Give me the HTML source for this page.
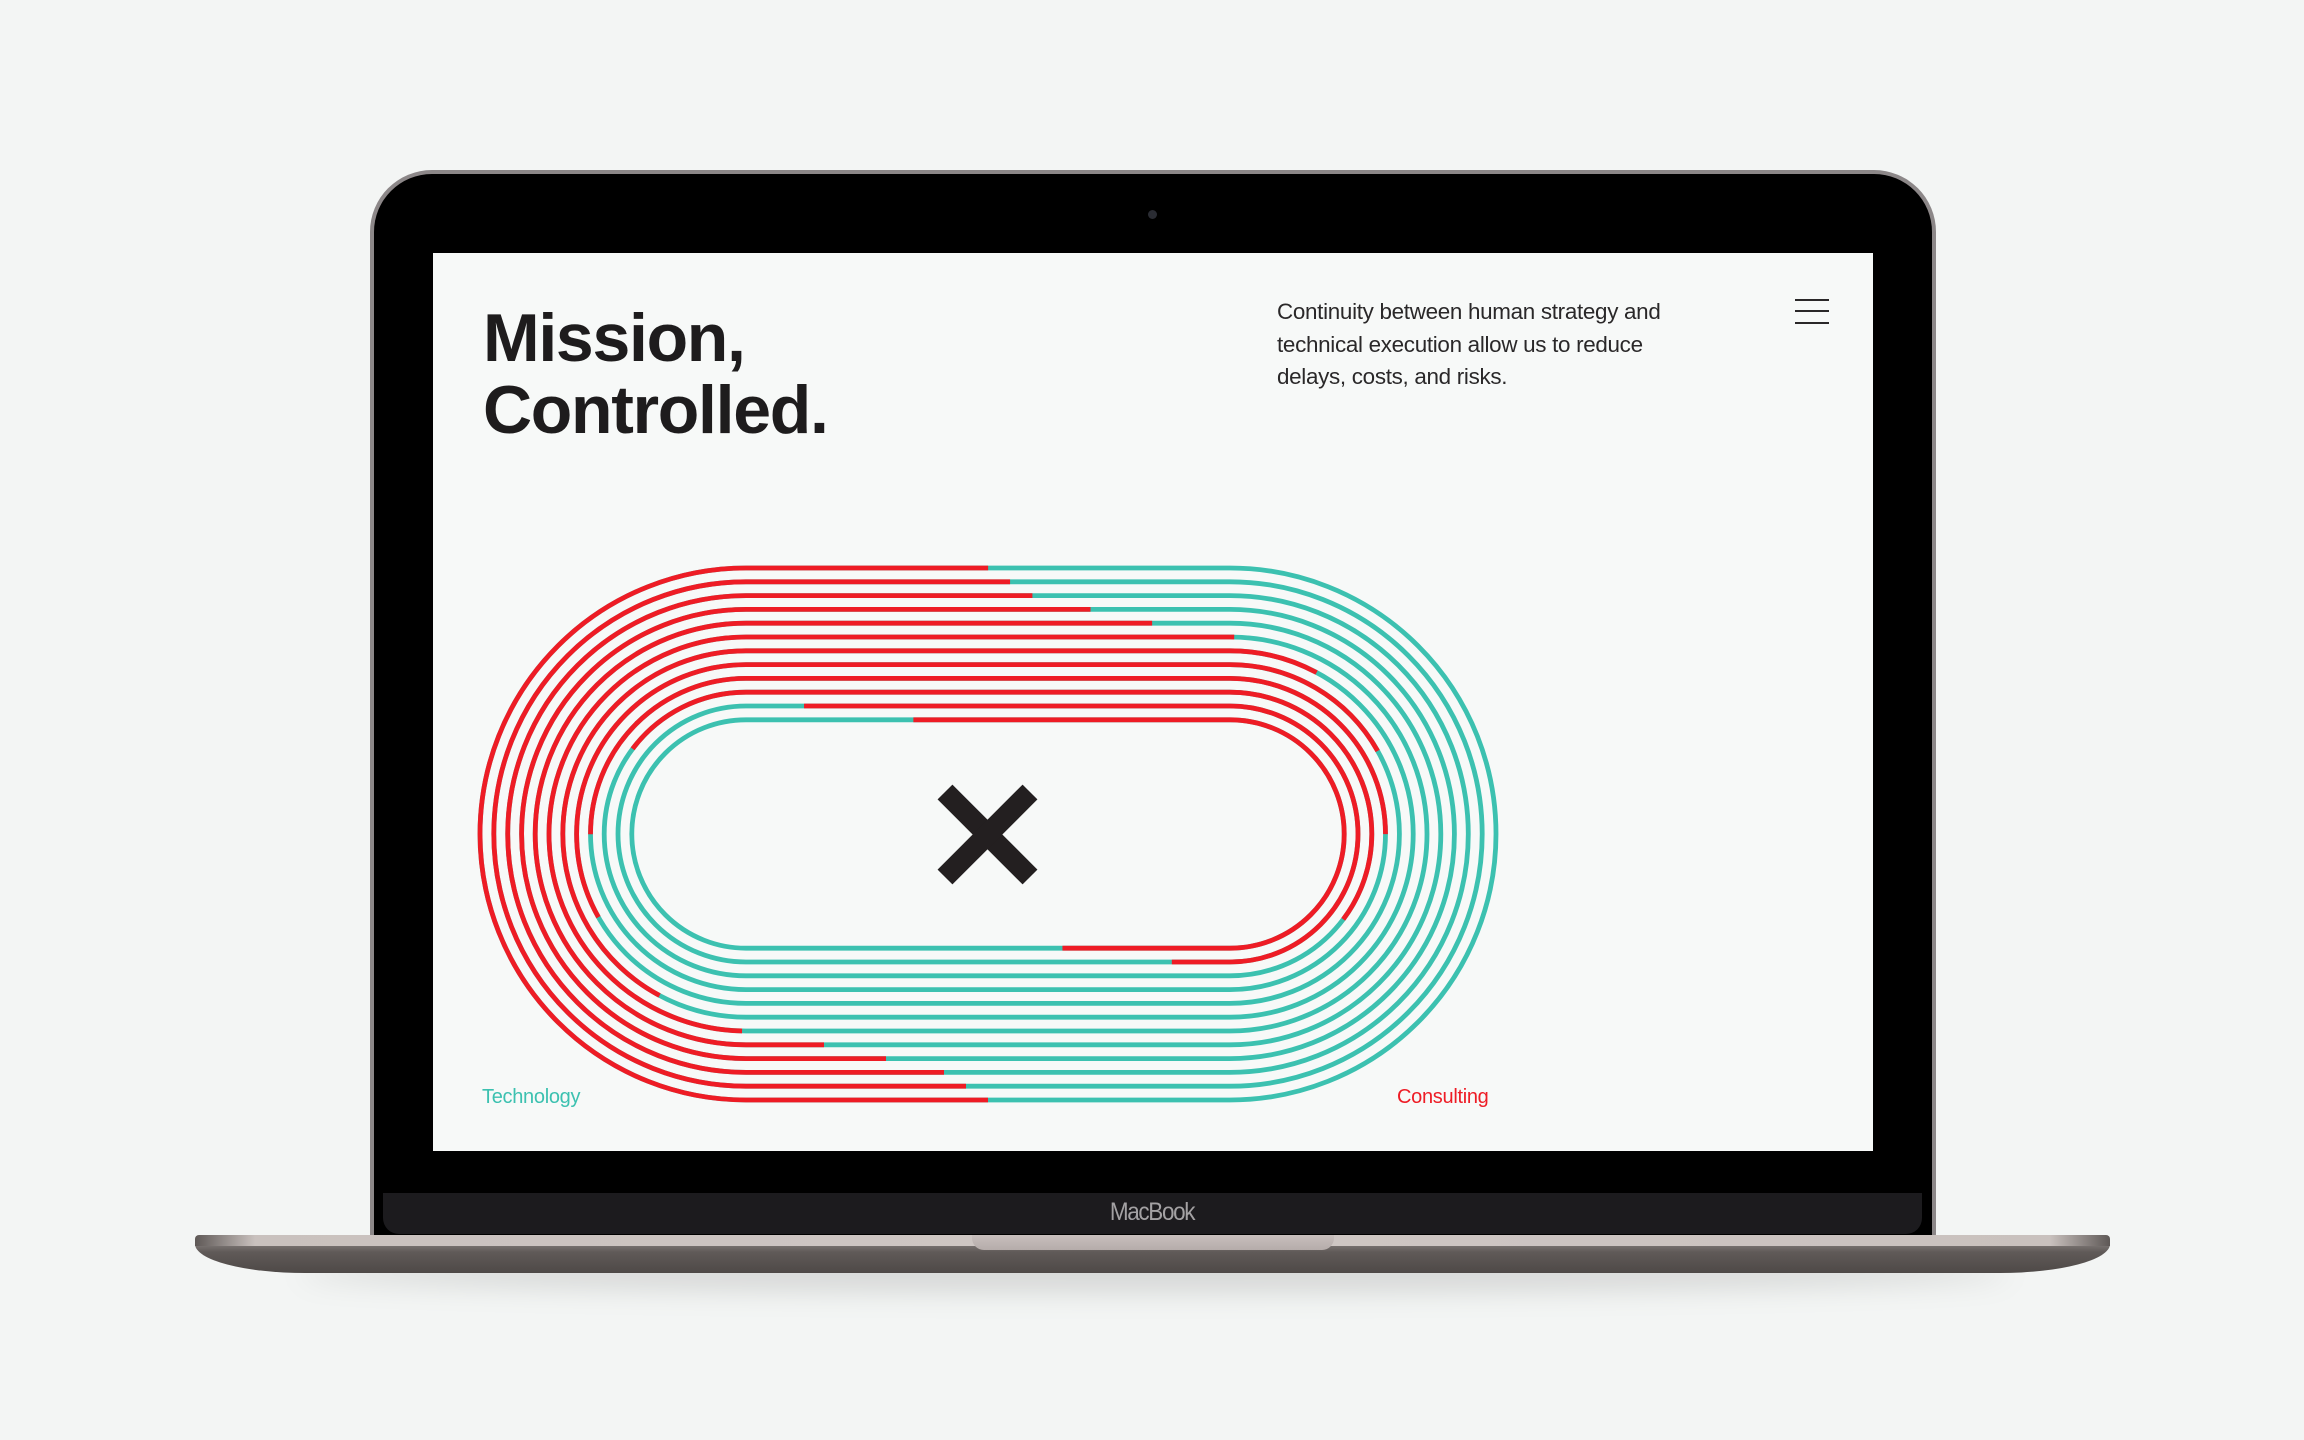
<!DOCTYPE html>
<html><head><meta charset="utf-8"><style>
html,body{margin:0;padding:0;}
body{width:2304px;height:1440px;position:relative;overflow:hidden;background:#f3f5f4;font-family:"Liberation Sans",sans-serif;}
.abs{position:absolute;}
</style></head><body>
<!-- shadow -->
<div class="abs" style="left:300px;top:1255px;width:1710px;height:36px;border-radius:50%;background:rgba(0,0,0,0.13);filter:blur(14px);"></div>
<!-- lid -->
<div class="abs" style="left:370px;top:170px;width:1566px;height:1080px;border-radius:62px 62px 0 0;background:#8c8788;"></div>
<div class="abs" style="left:374px;top:174px;width:1558px;height:1074px;border-radius:58px 58px 0 0;background:#000;"></div>
<div class="abs" style="left:383px;top:1193px;width:1539px;height:41px;background:#1c1b1e;border-radius:0 0 16px 16px;"></div>
<div class="abs" style="left:1052px;top:1198px;width:200px;text-align:center;color:#a3a1a3;font-size:25px;letter-spacing:-1.5px;transform:scaleX(0.9);">MacBook</div>
<div class="abs" style="left:1148px;top:210px;width:9px;height:9px;border-radius:50%;background:#2a2c33;"></div>
<!-- base -->
<div class="abs" style="left:195px;top:1244px;width:1915px;height:29px;border-radius:0 0 110px 110px / 0 0 29px 29px;background:linear-gradient(#7d7775 0,#605a58 8px,#4e4947 29px);"></div>
<div class="abs" style="left:195px;top:1235px;width:1915px;height:11px;border-radius:4px 4px 0 0;background:linear-gradient(90deg,#5e5856 0,#c9c1be 60px,#cfc7c4 50%,#c9c1be calc(100% - 60px),#5e5856 100%);"></div>
<div class="abs" style="left:972px;top:1235px;width:362px;height:15px;border-radius:0 0 12px 12px;background:linear-gradient(#c8bfbd,#b5acaa);"></div>
<!-- screen -->
<div class="abs" style="left:433px;top:253px;width:1440px;height:898px;background:#f7f9f8;overflow:hidden;">
  <div class="abs" style="left:50px;top:49px;font-size:68px;font-weight:bold;color:#1e1c1d;line-height:72px;letter-spacing:-1.3px;">Mission,<br>Controlled.</div>
  <div class="abs" style="left:844px;top:43px;font-size:22.4px;color:#2a2829;line-height:32.5px;letter-spacing:-0.3px;">Continuity between human strategy and<br>technical execution allow us to reduce<br>delays, costs, and risks.</div>
  <div class="abs" style="left:1362px;top:46px;width:34px;height:2px;background:#2a2829;"></div>
  <div class="abs" style="left:1362px;top:57px;width:34px;height:2px;background:#2a2829;"></div>
  <div class="abs" style="left:1362px;top:69px;width:34px;height:2px;background:#2a2829;"></div>
  <div class="abs" style="left:49px;top:833px;font-size:20px;color:#3cc1b0;letter-spacing:-0.3px;">Technology</div>
  <div class="abs" style="left:964px;top:833px;font-size:20px;color:#ee1c25;letter-spacing:-0.3px;">Consulting</div>
</div>
<svg class="abs" style="left:0;top:0;" width="2304" height="1440" viewBox="0 0 2304 1440">
<g fill="none" stroke-width="4.8" stroke-linecap="butt">
<g stroke="#3cc1b0">
<path d="M988 1100H746A266 266 0 0 1 746 568H1230A266 266 0 0 1 1230 1100Z"/>
<path d="M988 1086.2H746A252.2 252.2 0 0 1 746 581.8H1230A252.2 252.2 0 0 1 1230 1086.2Z"/>
<path d="M988 1072.4H746A238.4 238.4 0 0 1 746 595.6H1230A238.4 238.4 0 0 1 1230 1072.4Z"/>
<path d="M988 1058.6H746A224.6 224.6 0 0 1 746 609.4H1230A224.6 224.6 0 0 1 1230 1058.6Z"/>
<path d="M988 1044.8H746A210.8 210.8 0 0 1 746 623.2H1230A210.8 210.8 0 0 1 1230 1044.8Z"/>
<path d="M988 1031H746A197 197 0 0 1 746 637H1230A197 197 0 0 1 1230 1031Z"/>
<path d="M988 1017.2H746A183.2 183.2 0 0 1 746 650.8H1230A183.2 183.2 0 0 1 1230 1017.2Z"/>
<path d="M988 1003.4H746A169.4 169.4 0 0 1 746 664.6H1230A169.4 169.4 0 0 1 1230 1003.4Z"/>
<path d="M988 989.6H746A155.6 155.6 0 0 1 746 678.4H1230A155.6 155.6 0 0 1 1230 989.6Z"/>
<path d="M988 975.8H746A141.8 141.8 0 0 1 746 692.2H1230A141.8 141.8 0 0 1 1230 975.8Z"/>
<path d="M988 962H746A128 128 0 0 1 746 706H1230A128 128 0 0 1 1230 962Z"/>
<path d="M988 948.2H746A114.2 114.2 0 0 1 746 719.8H1230A114.2 114.2 0 0 1 1230 948.2Z"/>
</g>
<g stroke="#ee1c25">
<path stroke-dasharray="1319.7 1319.7" stroke-dashoffset="0" d="M988 1100H746A266 266 0 0 1 746 568H1230A266 266 0 0 1 1230 1100Z"/>
<path stroke-dasharray="1276.3 1276.3" stroke-dashoffset="-22" d="M988 1086.2H746A252.2 252.2 0 0 1 746 581.8H1230A252.2 252.2 0 0 1 1230 1086.2Z"/>
<path stroke-dasharray="1233 1233" stroke-dashoffset="-44" d="M988 1072.4H746A238.4 238.4 0 0 1 746 595.6H1230A238.4 238.4 0 0 1 1230 1072.4Z"/>
<path stroke-dasharray="1189.6 1189.6" stroke-dashoffset="-102" d="M988 1058.6H746A224.6 224.6 0 0 1 746 609.4H1230A224.6 224.6 0 0 1 1230 1058.6Z"/>
<path stroke-dasharray="1146.2 1146.2" stroke-dashoffset="-164" d="M988 1044.8H746A210.8 210.8 0 0 1 746 623.2H1230A210.8 210.8 0 0 1 1230 1044.8Z"/>
<path stroke-dasharray="1102.9 1102.9" stroke-dashoffset="-246" d="M988 1031H746A197 197 0 0 1 746 637H1230A197 197 0 0 1 1230 1031Z"/>
<path stroke-dasharray="1059.5 1059.5" stroke-dashoffset="-332" d="M988 1017.2H746A183.2 183.2 0 0 1 746 650.8H1230A183.2 183.2 0 0 1 1230 1017.2Z"/>
<path stroke-dasharray="1016.2 1016.2" stroke-dashoffset="-421" d="M988 1003.4H746A169.4 169.4 0 0 1 746 664.6H1230A169.4 169.4 0 0 1 1230 1003.4Z"/>
<path stroke-dasharray="972.8 972.8" stroke-dashoffset="-486" d="M988 989.6H746A155.6 155.6 0 0 1 746 678.4H1230A155.6 155.6 0 0 1 1230 989.6Z"/>
<path stroke-dasharray="929.5 929.5" stroke-dashoffset="-556" d="M988 975.8H746A141.8 141.8 0 0 1 746 692.2H1230A141.8 141.8 0 0 1 1230 975.8Z"/>
<path stroke-dasharray="886.1 886.1" stroke-dashoffset="-702" d="M988 962H746A128 128 0 0 1 746 706H1230A128 128 0 0 1 1230 962Z"/>
<path stroke-dasharray="842.8 842.8" stroke-dashoffset="-768" d="M988 948.2H746A114.2 114.2 0 0 1 746 719.8H1230A114.2 114.2 0 0 1 1230 948.2Z"/>
</g>
</g>
<g stroke="#231f20" stroke-width="21" stroke-linecap="butt">
<line x1="945" y1="792" x2="1030" y2="877"/>
<line x1="1030" y1="792" x2="945" y2="877"/>
</g>
</svg>
</body></html>
